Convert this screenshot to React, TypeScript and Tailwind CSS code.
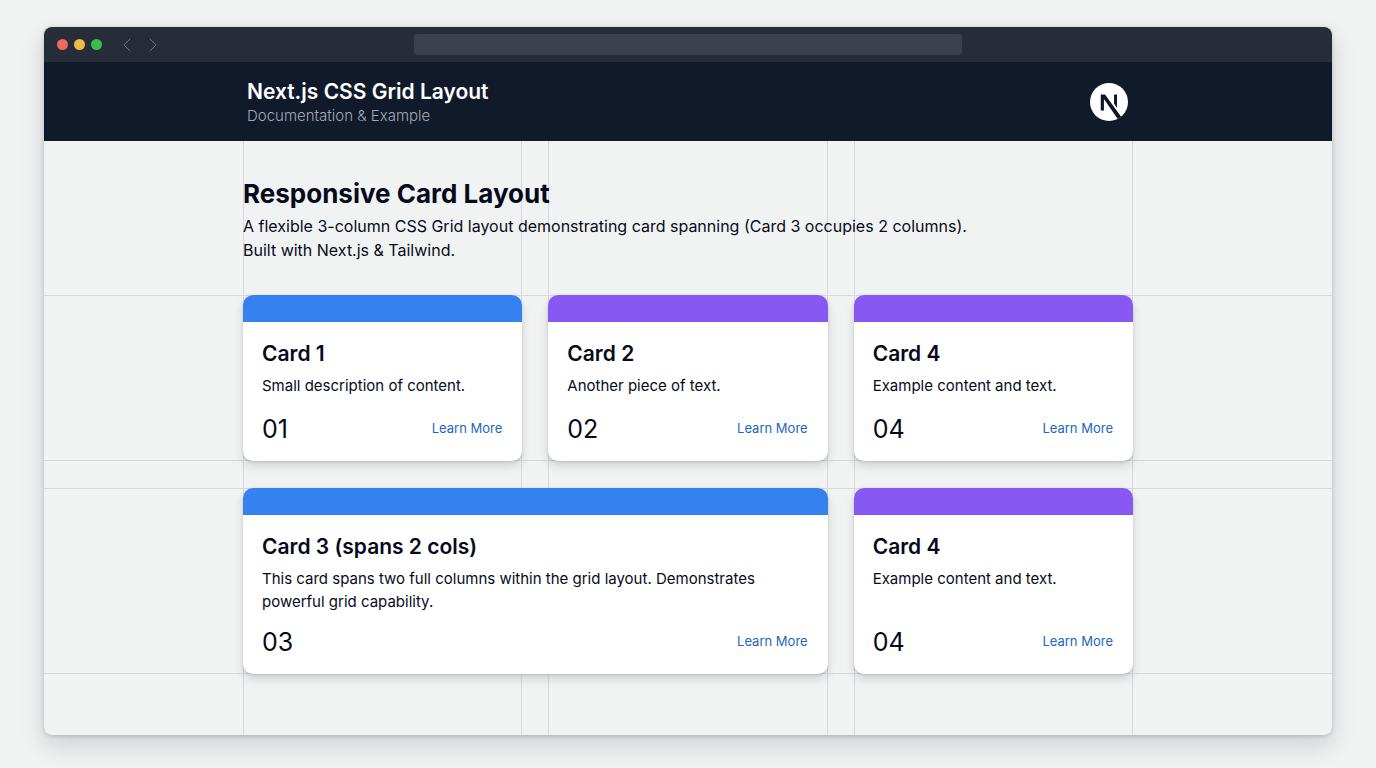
import { ChevronLeft, ChevronRight } from 'lucide-react'

type CardData = {
	title: string
	description: string
	number: string
	color: 'blue' | 'purple'
	wide?: boolean
}

const rows: CardData[][] = [
	[
		{ title: 'Card 1', description: 'Small description of content.', number: '01', color: 'blue' },
		{ title: 'Card 2', description: 'Another piece of text.', number: '02', color: 'purple' },
		{ title: 'Card 4', description: 'Example content and text.', number: '04', color: 'purple' }
	],
	[
		{
			title: 'Card 3 (spans 2 cols)',
			description: 'This card spans two full columns within the grid layout. Demonstrates powerful grid capability.',
			number: '03',
			color: 'blue',
			wide: true
		},
		{ title: 'Card 4', description: 'Example content and text.', number: '04', color: 'purple' }
	]
]

const NextLogo = () => (
	<svg viewBox="0 0 180 180" className="size-[38px]" role="img" aria-label="Next.js">
		<defs>
			<clipPath id="disc">
				<circle cx="90" cy="90" r="90" />
			</clipPath>
		</defs>
		<circle cx="90" cy="90" r="90" fill="#fff" />
		<g clipPath="url(#disc)" fill="#0d1526">
			<path d="M156 172 L71 54 H51 V130 H66 V76 L138 180 Z" />
			<path d="M114 54 H128 V117 L114 98 Z" />
		</g>
	</svg>
)

const BrowserBar = () => (
	<div className="flex h-[35px] items-center bg-[#262c38] px-[13px]">
		<div className="flex flex-1 items-center">
			<div className="flex gap-1.5">
				<span className="size-[11px] rounded-full bg-[#ee6a5f]" />
				<span className="size-[11px] rounded-full bg-[#f0bb45]" />
				<span className="size-[11px] rounded-full bg-[#3fbb4d]" />
			</div>
			<div className="ml-[13px] flex gap-0.5 text-[#6b7282]">
				<button type="button" aria-label="Back">
					<ChevronLeft size={24} strokeWidth={1} />
				</button>
				<button type="button" aria-label="Forward">
					<ChevronRight size={24} strokeWidth={1} />
				</button>
			</div>
		</div>
		<input
			type="text"
			aria-label="Address"
			className="h-[21px] w-[43.4%] rounded bg-[#3b414e] px-2 text-xs text-gray-200 outline-none"
		/>
		<div className="flex-1" />
	</div>
)

const Card = ({ title, description, number, color, wide }: CardData) => (
	<article
		className={`flex min-h-[166px] flex-col overflow-hidden rounded-[10px] bg-white shadow-[0_5px_10px_rgba(20,25,45,0.14),0_1px_3px_rgba(20,25,45,0.14)] ${wide ? 'col-span-2' : ''}`}>
		<div className={`h-[27px] ${color === 'blue' ? 'bg-[#3681f0]' : 'bg-[#8858f2]'}`} />
		<div className="flex flex-1 flex-col pt-[18px] pr-5 pb-4 pl-[19px]">
			<h3 className="text-[21px] leading-7 font-semibold">{title}</h3>
			<p className="mt-1.5 text-[15px] leading-[23px]">{description}</p>
			<div className="mt-auto flex items-center justify-between pt-[13px]">
				<span className="text-[25px] leading-8">{number}</span>
				<a href="#" className="text-[13px] text-[#2366bd] hover:underline">
					Learn More
				</a>
			</div>
		</div>
	</article>
)

// Column guides behind the content
const ColumnGuides = () => (
	<div aria-hidden="true" className="absolute inset-0">
		<div className="mx-auto grid h-full max-w-[890px] grid-cols-3 gap-[26px]">
			<div className="border-x border-[#d6d7df]" />
			<div className="border-x border-[#d6d7df]" />
			<div className="border-x border-[#d6d7df]" />
		</div>
	</div>
)

const App = () => {
	return (
		<div className="flex min-h-screen flex-col bg-[#f1f2f2] px-11 pt-[27px] pb-[33px] font-[Inter,sans-serif] text-[#060b1c]">
			<div className="flex flex-1 flex-col overflow-hidden rounded-lg bg-[#f1f3f2] shadow-[0_10px_24px_rgba(20,25,40,0.16),0_1px_4px_rgba(20,25,40,0.18)]">
				<BrowserBar />

				<header className="bg-[#111a2b]">
					<div className="mx-auto flex h-[79px] max-w-[890px] items-center justify-between pr-[5px] pl-1">
						<div className="pt-[5px]">
							<h1 className="text-[21px] leading-6 font-semibold text-white">Next.js CSS Grid Layout</h1>
							<p className="text-[15px] leading-6 font-light text-[#a3a9b8]">Documentation &amp; Example</p>
						</div>
						<NextLogo />
					</div>
				</header>

				<main className="relative flex-1 pb-[60px]">
					<ColumnGuides />
					<div className="relative">
						<div className="mx-auto max-w-[890px] pt-[35px] pb-[33px]">
							<h2 className="text-[26px] leading-9 font-bold">Responsive Card Layout</h2>
							<p className="mt-0.5 text-base leading-6">
								A flexible 3-column CSS Grid layout demonstrating card spanning (Card 3 occupies 2 columns).
								<br />
								Built with Next.js &amp; Tailwind.
							</p>
						</div>

						<div className="flex flex-col gap-[27px]">
							{rows.map((cards, i) => (
								<div key={i} className="border-y border-[#d6d7df]">
									<div className="mx-auto -my-px grid max-w-[890px] grid-cols-3 gap-[26px]">
										{cards.map(card => <Card key={card.title} {...card} />)}
									</div>
								</div>
							))}
						</div>
					</div>
				</main>
			</div>
		</div>
	)
}

export default App
